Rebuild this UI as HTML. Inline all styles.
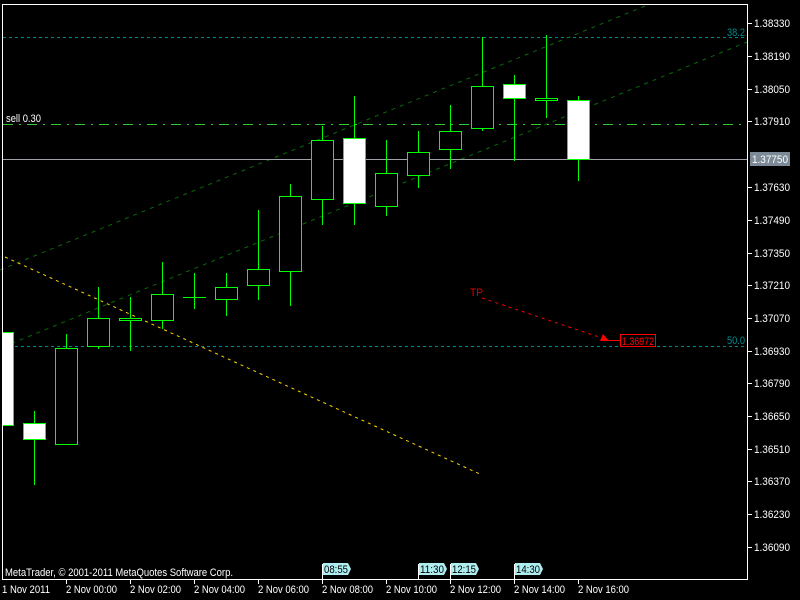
<!DOCTYPE html>
<html><head><meta charset="utf-8"><style>
html,body{margin:0;padding:0;background:#000;width:800px;height:600px;overflow:hidden}
svg{display:block}
text{font-family:"Liberation Sans",sans-serif;font-size:11px}
</style></head><body>
<svg width="800" height="600" viewBox="0 0 800 600" xmlns="http://www.w3.org/2000/svg" shape-rendering="crispEdges">
<rect width="800" height="600" fill="#000"/>
<line x1="3" y1="37.5" x2="747" y2="37.5" stroke="#008b8b" stroke-dasharray="3,3"/>
<line x1="3" y1="346.5" x2="747" y2="346.5" stroke="#008b8b" stroke-dasharray="3,3"/>
<text x="727" y="36" fill="#008b8b" textLength="18" lengthAdjust="spacingAndGlyphs">38.2</text>
<text x="727" y="344" fill="#008b8b" textLength="18" lengthAdjust="spacingAndGlyphs">50.0</text>
<line x1="0" y1="270" x2="650" y2="4" stroke="#0a6a0a" stroke-dasharray="4,5" shape-rendering="auto"/>
<line x1="3" y1="347" x2="747" y2="42" stroke="#0a6a0a" stroke-dasharray="4,5" shape-rendering="auto"/>
<line x1="5" y1="257" x2="482" y2="475" stroke="#ffd700" stroke-dasharray="3,4" shape-rendering="auto"/>
<line x1="3" y1="124.5" x2="747" y2="124.5" stroke="#32cd32" stroke-width="1" stroke-dasharray="10,6,2,6"/>
<text x="6" y="122" fill="#fff" textLength="35" lengthAdjust="spacingAndGlyphs">sell 0.30</text>
<line x1="3" y1="159.5" x2="747" y2="159.5" stroke="#a0a0a8"/>
<g stroke="#00ff00" stroke-width="1">
<rect x="2.5" y="332.5" width="11" height="93" fill="#fff"/>
<line x1="34.5" y1="411" x2="34.5" y2="485"/><rect x="23.5" y="423.5" width="22" height="16" fill="#fff"/>
<line x1="66.5" y1="334" x2="66.5" y2="348"/><rect x="55.5" y="348.5" width="22" height="96" fill="#000"/>
<line x1="98.5" y1="287" x2="98.5" y2="349"/><rect x="87.5" y="318.5" width="22" height="28" fill="#000"/>
<line x1="130.5" y1="297" x2="130.5" y2="351"/><rect x="119.5" y="318.5" width="22" height="2" fill="#000"/>
<line x1="162.5" y1="262" x2="162.5" y2="329"/><rect x="151.5" y="294.5" width="22" height="26" fill="#000"/>
<line x1="194.5" y1="273" x2="194.5" y2="309"/><line x1="183" y1="297.5" x2="206" y2="297.5"/>
<line x1="226.5" y1="273" x2="226.5" y2="316"/><rect x="215.5" y="287.5" width="22" height="12" fill="#000"/>
<line x1="258.5" y1="210" x2="258.5" y2="300"/><rect x="247.5" y="269.5" width="22" height="16" fill="#000"/>
<line x1="290.5" y1="184" x2="290.5" y2="306"/><rect x="279.5" y="196.5" width="22" height="75" fill="#000"/>
<line x1="322.5" y1="126" x2="322.5" y2="225"/><rect x="311.5" y="140.5" width="22" height="59" fill="#000"/>
<line x1="354.5" y1="96" x2="354.5" y2="225"/><rect x="343.5" y="138.5" width="22" height="65" fill="#fff"/>
<line x1="386.5" y1="140" x2="386.5" y2="216"/><rect x="375.5" y="173.5" width="22" height="33" fill="#000"/>
<line x1="418.5" y1="131" x2="418.5" y2="188"/><rect x="407.5" y="152.5" width="22" height="23" fill="#000"/>
<line x1="450.5" y1="105" x2="450.5" y2="169"/><rect x="439.5" y="131.5" width="22" height="18" fill="#000"/>
<line x1="482.5" y1="37" x2="482.5" y2="131"/><rect x="471.5" y="86.5" width="22" height="42" fill="#000"/>
<line x1="514.5" y1="75" x2="514.5" y2="161"/><rect x="503.5" y="84.5" width="22" height="14" fill="#fff"/>
<line x1="546.5" y1="35" x2="546.5" y2="118"/><rect x="535.5" y="98.5" width="22" height="2" fill="#000"/>
<line x1="578.5" y1="96" x2="578.5" y2="181"/><rect x="567.5" y="100.5" width="22" height="59" fill="#fff"/>
</g>
<text x="470" y="296" fill="#e00000" font-size="12" textLength="13" lengthAdjust="spacingAndGlyphs">TP</text>
<line x1="482" y1="298" x2="602" y2="338" stroke="#ff0000" stroke-dasharray="3,4" shape-rendering="auto"/>
<polygon points="600,341 603,334 609,341" fill="#ff0000"/>
<line x1="608" y1="340.5" x2="620" y2="340.5" stroke="#ff0000"/>
<rect x="620.5" y="334.5" width="35" height="12" fill="#000" stroke="#ff0000"/>
<text x="622" y="345" fill="#ff0000" textLength="32" lengthAdjust="spacingAndGlyphs">1.36972</text>
<path d="M2.5 4 V579.5 H747.5 V4.5 H2" fill="none" stroke="#fff"/>
<g fill="#fff">
<text x="754" y="27" textLength="36" lengthAdjust="spacingAndGlyphs">1.38330</text>
<text x="754" y="60" textLength="36" lengthAdjust="spacingAndGlyphs">1.38190</text>
<text x="754" y="93" textLength="36" lengthAdjust="spacingAndGlyphs">1.38050</text>
<text x="754" y="125" textLength="36" lengthAdjust="spacingAndGlyphs">1.37910</text>
<text x="754" y="191" textLength="36" lengthAdjust="spacingAndGlyphs">1.37630</text>
<text x="754" y="224" textLength="36" lengthAdjust="spacingAndGlyphs">1.37490</text>
<text x="754" y="257" textLength="36" lengthAdjust="spacingAndGlyphs">1.37350</text>
<text x="754" y="289" textLength="36" lengthAdjust="spacingAndGlyphs">1.37210</text>
<text x="754" y="322" textLength="36" lengthAdjust="spacingAndGlyphs">1.37070</text>
<text x="754" y="355" textLength="36" lengthAdjust="spacingAndGlyphs">1.36930</text>
<text x="754" y="387" textLength="36" lengthAdjust="spacingAndGlyphs">1.36790</text>
<text x="754" y="420" textLength="36" lengthAdjust="spacingAndGlyphs">1.36650</text>
<text x="754" y="453" textLength="36" lengthAdjust="spacingAndGlyphs">1.36510</text>
<text x="754" y="485" textLength="36" lengthAdjust="spacingAndGlyphs">1.36370</text>
<text x="754" y="518" textLength="36" lengthAdjust="spacingAndGlyphs">1.36230</text>
<text x="754" y="551" textLength="36" lengthAdjust="spacingAndGlyphs">1.36090</text>
</g>
<g stroke="#fff">
<line x1="747" y1="23.5" x2="752" y2="23.5"/><line x1="747" y1="56.5" x2="752" y2="56.5"/><line x1="747" y1="89.5" x2="752" y2="89.5"/><line x1="747" y1="121.5" x2="752" y2="121.5"/><line x1="747" y1="187.5" x2="752" y2="187.5"/><line x1="747" y1="220.5" x2="752" y2="220.5"/><line x1="747" y1="253.5" x2="752" y2="253.5"/><line x1="747" y1="285.5" x2="752" y2="285.5"/><line x1="747" y1="318.5" x2="752" y2="318.5"/><line x1="747" y1="351.5" x2="752" y2="351.5"/><line x1="747" y1="383.5" x2="752" y2="383.5"/><line x1="747" y1="416.5" x2="752" y2="416.5"/><line x1="747" y1="449.5" x2="752" y2="449.5"/><line x1="747" y1="481.5" x2="752" y2="481.5"/><line x1="747" y1="514.5" x2="752" y2="514.5"/><line x1="747" y1="547.5" x2="752" y2="547.5"/>
</g>
<rect x="750" y="152" width="40" height="14" fill="#7b8a96"/>
<text x="752" y="163" fill="#fff" textLength="36" lengthAdjust="spacingAndGlyphs">1.37750</text>
<g stroke="#fff">
<line x1="66.5" y1="579" x2="66.5" y2="584"/><line x1="130.5" y1="579" x2="130.5" y2="584"/><line x1="194.5" y1="579" x2="194.5" y2="584"/><line x1="258.5" y1="579" x2="258.5" y2="584"/><line x1="322.5" y1="579" x2="322.5" y2="584"/><line x1="386.5" y1="579" x2="386.5" y2="584"/><line x1="450.5" y1="579" x2="450.5" y2="584"/><line x1="514.5" y1="579" x2="514.5" y2="584"/><line x1="578.5" y1="579" x2="578.5" y2="584"/>
<line x1="322.5" y1="564" x2="322.5" y2="579"/><line x1="418.5" y1="564" x2="418.5" y2="579"/><line x1="450.5" y1="564" x2="450.5" y2="579"/><line x1="514.5" y1="564" x2="514.5" y2="579"/>
</g>
<g fill="#fff">
<text x="2" y="593" textLength="48" lengthAdjust="spacingAndGlyphs">1 Nov 2011</text>
<text x="66" y="593" textLength="51" lengthAdjust="spacingAndGlyphs">2 Nov 00:00</text>
<text x="130" y="593" textLength="51" lengthAdjust="spacingAndGlyphs">2 Nov 02:00</text>
<text x="194" y="593" textLength="51" lengthAdjust="spacingAndGlyphs">2 Nov 04:00</text>
<text x="258" y="593" textLength="51" lengthAdjust="spacingAndGlyphs">2 Nov 06:00</text>
<text x="322" y="593" textLength="51" lengthAdjust="spacingAndGlyphs">2 Nov 08:00</text>
<text x="386" y="593" textLength="51" lengthAdjust="spacingAndGlyphs">2 Nov 10:00</text>
<text x="450" y="593" textLength="51" lengthAdjust="spacingAndGlyphs">2 Nov 12:00</text>
<text x="514" y="593" textLength="51" lengthAdjust="spacingAndGlyphs">2 Nov 14:00</text>
<text x="578" y="593" textLength="51" lengthAdjust="spacingAndGlyphs">2 Nov 16:00</text>
<text x="5" y="576" textLength="228" lengthAdjust="spacingAndGlyphs">MetaTrader, © 2001-2011 MetaQuotes Software Corp.</text>
</g>
<g fill="#aeeef0">
<polygon points="323,563 348,563 351,569 348,575 323,575"/>
<polygon points="419,563 444,563 447,569 444,575 419,575"/>
<polygon points="451,563 476,563 479,569 476,575 451,575"/>
<polygon points="515,563 540,563 543,569 540,575 515,575"/>
</g>
<g fill="#000">
<text x="324" y="573" textLength="24" lengthAdjust="spacingAndGlyphs">08:55</text>
<text x="420" y="573" textLength="24" lengthAdjust="spacingAndGlyphs">11:30</text>
<text x="452" y="573" textLength="24" lengthAdjust="spacingAndGlyphs">12:15</text>
<text x="516" y="573" textLength="24" lengthAdjust="spacingAndGlyphs">14:30</text>
</g>
</svg>
</body></html>
